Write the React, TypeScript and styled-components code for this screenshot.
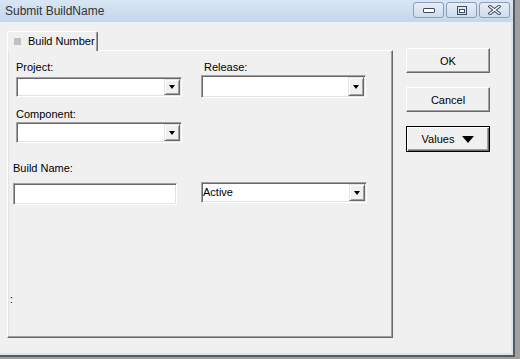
import styled, { createGlobalStyle } from "styled-components";

const GlobalStyle = createGlobalStyle`
  html, body {
    margin: 0;
    padding: 0;
    background: #a0a0a0;
  }
  body {
    font-family: "Liberation Sans", Arial, sans-serif;
    font-size: 11px;
    color: #000;
  }
`;

const Window = styled.div`
  width: 515px;
  height: 357px;
  box-sizing: border-box;
  display: flex;
  flex-direction: column;
  background: #f0f0f0;
  border-right: 2px solid #595959;
  border-bottom: 2px solid #595959;
`;

const TitleBar = styled.div`
  height: 23px;
  flex: none;
  box-sizing: border-box;
  display: flex;
  align-items: center;
  justify-content: space-between;
  padding: 0 3px 0 5px;
  background: linear-gradient(#d8e5f4, #c5d7eb);
  border-bottom: 1px solid #e9f0f8;
`;

const Title = styled.span`
  font-size: 12px;
  color: #333;
  margin-top: -1px;
`;

const Caption = styled.div`
  display: flex;
  gap: 2px;
  margin-top: -2px;
`;

const CaptionButton = styled.div`
  width: 31px;
  height: 16px;
  box-sizing: border-box;
  display: flex;
  align-items: center;
  justify-content: center;
  border: 1px solid #8d9db3;
  border-radius: 3px;
  background: linear-gradient(#e6eef7, #cfdcec);
`;

const Content = styled.div`
  flex: 1;
  display: flex;
  align-items: flex-start;
  padding: 8px 0 0 7px;
  border-right: 2px solid #d9e4f1;
  border-bottom: 2px solid #d9e4f1;
`;

const LeftColumn = styled.div`
  width: 386px;
  display: flex;
  flex-direction: column;
`;

const Tab = styled.div`
  align-self: flex-start;
  position: relative;
  z-index: 1;
  width: 91px;
  height: 20px;
  margin-bottom: -1px;
  box-sizing: border-box;
  display: flex;
  align-items: center;
  gap: 7px;
  padding: 0 0 1px 6px;
  background: #f0f0f0;
  border-top: 1px solid #fff;
  border-left: 1px solid #fff;
  border-right: 1px solid #696969;
  box-shadow: inset -1px 0 0 #a0a0a0;
  border-radius: 2px 2px 0 0;
`;

const TabMark = styled.span`
  width: 7px;
  height: 7px;
  background: #c0c0c0;
`;

const Panel = styled.div`
  height: 288px;
  box-sizing: border-box;
  display: flex;
  flex-direction: column;
  padding: 10px 0 0 8px;
  border-top: 1px solid #fff;
  border-left: 1px solid #fff;
  border-right: 1px solid #696969;
  border-bottom: 1px solid #696969;
  box-shadow: inset -1px -1px 0 #a0a0a0, inset 1px 0 0 #e3e3e3;
`;

const Row = styled.div<{ $top?: number; $left?: number; $gap?: number }>`
  display: flex;
  align-items: flex-start;
  margin-top: ${(p) => p.$top ?? 0}px;
  margin-left: ${(p) => p.$left ?? 0}px;
  gap: ${(p) => p.$gap ?? 0}px;
`;

const Field = styled.div`
  display: flex;
  flex-direction: column;
`;

const Label = styled.span<{ $indent?: number }>`
  display: block;
  line-height: 13px;
  padding-left: ${(p) => p.$indent ?? 0}px;
`;

const Sunken = styled.div<{ $w: number; $h: number; $top?: number }>`
  width: ${(p) => p.$w}px;
  height: ${(p) => p.$h}px;
  margin-top: ${(p) => p.$top ?? 0}px;
  box-sizing: border-box;
  display: flex;
  align-items: stretch;
  background: #fff;
  border-top: 1px solid #a0a0a0;
  border-left: 1px solid #a0a0a0;
  border-right: 1px solid #fff;
  border-bottom: 1px solid #fff;
  box-shadow: inset 1px 1px 0 #696969, inset -1px -1px 0 #e3e3e3;
  padding: 1px;
`;

const ComboText = styled.span`
  flex: 1;
  display: flex;
  align-items: center;
  padding-bottom: 1px;
`;

const ArrowButton = styled.span`
  width: 16px;
  box-sizing: border-box;
  display: flex;
  align-items: center;
  justify-content: center;
  background: #f0f0f0;
  border-top: 1px solid #e3e3e3;
  border-left: 1px solid #e3e3e3;
  border-right: 1px solid #696969;
  border-bottom: 1px solid #696969;
  box-shadow: inset 1px 1px 0 #fff, inset -1px -1px 0 #a0a0a0;
`;

const Triangle = styled.span<{ $size?: number }>`
  width: 0;
  height: 0;
  border-left: ${(p) => p.$size ?? 3.5}px solid transparent;
  border-right: ${(p) => p.$size ?? 3.5}px solid transparent;
  border-top: ${(p) => Math.round((p.$size ?? 3.5) * 1.1)}px solid #000;
`;

const Marker = styled.span`
  margin: 90px 0 0 -6px;
  font-size: 10px;
  line-height: 10px;
`;

const RightColumn = styled.div`
  margin: 17px 0 0 13px;
  display: flex;
  flex-direction: column;
  gap: 14px;
`;

const Button = styled.div<{ $default?: boolean }>`
  width: 84px;
  height: ${(p) => (p.$default ? 26 : 25)}px;
  box-sizing: border-box;
  display: flex;
  align-items: center;
  justify-content: center;
  gap: 8px;
  background: #f0f0f0;
  border: 1px solid;
  border-color: ${(p) => (p.$default ? "#000" : "#fff #696969 #696969 #fff")};
  box-shadow: ${(p) =>
    p.$default
      ? "inset 1px 1px 0 #fff, inset -1px -1px 0 #696969, inset -2px -2px 0 #a0a0a0"
      : "inset -1px -1px 0 #a0a0a0"};
`;

function Combo({ w, h, top, value }: { w: number; h: number; top?: number; value?: string }) {
  return (
    <Sunken $w={w} $h={h} $top={top}>
      <ComboText>{value}</ComboText>
      <ArrowButton>
        <Triangle />
      </ArrowButton>
    </Sunken>
  );
}

export default function App() {
  return (
    <>
      <GlobalStyle />
      <Window>
        <TitleBar>
          <Title>Submit BuildName</Title>
          <Caption>
            <CaptionButton>
              <svg width="12" height="6" viewBox="0 0 12 6">
                <rect x="0.5" y="1.5" width="11" height="4" rx="0.5" fill="#fff" stroke="#3f4c5e" />
              </svg>
            </CaptionButton>
            <CaptionButton>
              <svg width="10" height="9" viewBox="0 0 10 9">
                <rect x="0.5" y="0.5" width="9" height="8" fill="none" stroke="#3f4c5e" />
                <rect x="2.5" y="3.5" width="5" height="3" fill="#fff" stroke="#3f4c5e" />
              </svg>
            </CaptionButton>
            <CaptionButton>
              <svg width="13" height="10" viewBox="0 0 13 10">
                <path d="M2 1.5 L11 8.5 M11 1.5 L2 8.5" stroke="#3f4c5e" strokeWidth="3.4" strokeLinecap="square" />
                <path d="M2 1.5 L11 8.5 M11 1.5 L2 8.5" stroke="#fff" strokeWidth="1.4" strokeLinecap="square" />
              </svg>
            </CaptionButton>
          </Caption>
        </TitleBar>
        <Content>
          <LeftColumn>
            <Tab>
              <TabMark />
              <span>Build Number</span>
            </Tab>
            <Panel>
              <Row $gap={19}>
                <Field>
                  <Label>Project:</Label>
                  <Combo w={166} h={20} top={3} />
                </Field>
                <Field>
                  <Label $indent={3}>Release:</Label>
                  <Combo w={165} h={23} top={1} />
                </Field>
              </Row>
              <Row $top={10}>
                <Field>
                  <Label>Component:</Label>
                  <Combo w={166} h={21} top={1} />
                </Field>
              </Row>
              <Row $top={19} $left={-3} $gap={24}>
                <Field>
                  <Label>Build Name:</Label>
                  <Sunken $w={164} $h={22} $top={8} />
                </Field>
                <Combo w={166} h={21} top={20} value="Active" />
              </Row>
              <Marker>:</Marker>
            </Panel>
          </LeftColumn>
          <RightColumn>
            <Button>OK</Button>
            <Button>Cancel</Button>
            <Button $default>
              <span>Values</span>
              <Triangle $size={6} />
            </Button>
          </RightColumn>
        </Content>
      </Window>
    </>
  );
}
